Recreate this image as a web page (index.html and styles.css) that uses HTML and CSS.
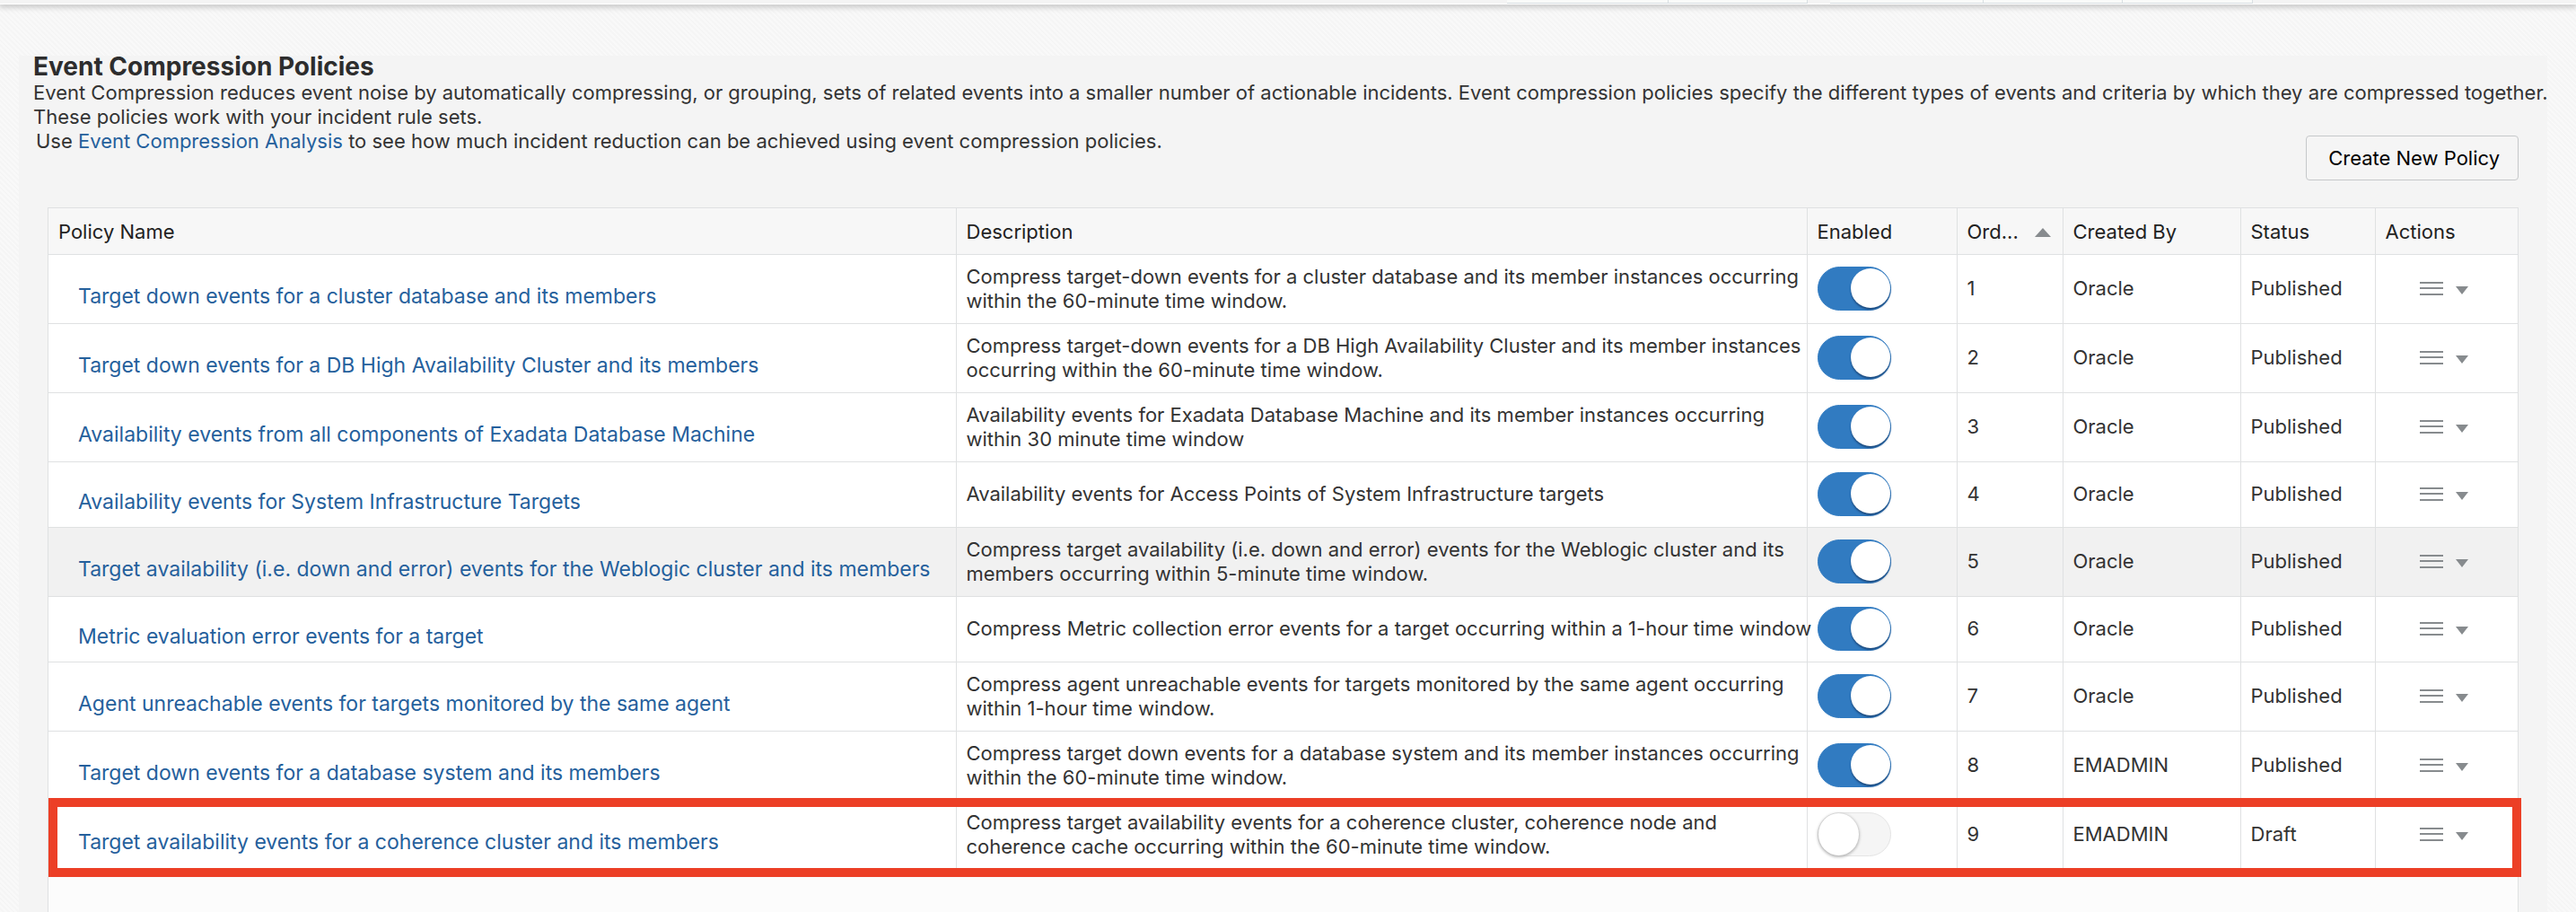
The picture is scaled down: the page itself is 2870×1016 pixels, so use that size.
FILE: index.html
```html
<!DOCTYPE html>
<html lang="en">
<head>
<meta charset="utf-8">
<title>Event Compression Policies</title>
<link rel="stylesheet" href="styles.css">
</head>
<body>
<header class="topbar"><span class="tab-group"><i class="tab tab-a"></i><i class="tab tab-b"></i></span><span class="tab-group"><i class="tab tab-c"></i><i class="tab tab-b"></i><i class="tab tab-d"></i></span></header>
<main class="panel">
  <section class="intro">
    <h1>Event Compression Policies</h1>
    <p class="lead">Event Compression reduces event noise by automatically compressing, or grouping, sets of related events into a smaller number of actionable incidents. Event compression policies specify the different types of events and criteria by which they are compressed together. These policies work with your incident rule sets.</p>
    <div class="toolbar">
      <p>Use <a href="#">Event Compression Analysis</a> to see how much incident reduction can be achieved using event compression policies.</p>
      <button class="create" type="button">Create New Policy</button>
    </div>
  </section>
  <div class="grid">
  <table>
    <colgroup><col class="c-name"><col class="c-desc"><col class="c-enabled"><col class="c-order"><col class="c-by"><col class="c-status"><col class="c-actions"></colgroup>
    <thead>
      <tr><th>Policy Name</th><th>Description</th><th>Enabled</th><th><span class="sorted">Ord...<svg class="sort" viewBox="0 0 18 10"><path d="M9 0 18 10H0Z"/></svg></span></th><th>Created By</th><th>Status</th><th>Actions</th></tr>
    </thead>
    <tbody id="rows"></tbody>
  </table>
  </div>
</main>
<script src="policies.js"></script>
</body>
</html>
```
FILE: styles.css
```css
* { box-sizing: border-box; }
body {
  margin: 0;
  min-height: 100vh;
  display: flex;
  flex-direction: column;
  font: 22px/27px Inter, "Liberation Sans", sans-serif;
  color: #333;
  background: repeating-linear-gradient(45deg, #f9f9f9 0 2px, #f5f5f5 2px 4px);
}
a { color: #25609c; text-decoration: none; }
.topbar {
  flex: none;
  height: 5px;
  display: flex;
  justify-content: flex-end;
  gap: 25px;
  padding-right: 360px;
  background: #f4f4f4;
  border-bottom: 1px solid #fff;
  box-shadow: 0 2px 6px 1px #c4c4c4;
}
.tab-group { display: flex; }
.tab { background: #f9faf9; border: 1px solid #d8dfe2; border-top: 0; border-left: 0; }
.tab-a { width: 180px; }
.tab-b { width: 155px; }
.tab-c { width: 171px; }
.tab-d { width: 145px; }
.panel {
  flex: 1;
  display: flex;
  flex-direction: column;
  margin: 57px 32px 0 21px;
  padding: 0 32px;
  background: #f4f4f4;
}
.intro { margin: 0 -16px; }
h1 { margin: 0; padding-bottom: 4px; font-size: 28px; line-height: 24px; color: #2d2d2d; }
p { margin: 0; }
.lead { margin-right: -40px; }
.toolbar { display: flex; justify-content: space-between; align-items: flex-start; padding: 0 16px 30px 3px; }
.create {
  height: 50px;
  margin-top: 7px;
  padding: 0 20px 0 24px;
  font: inherit;
  color: #000;
  background: #f5f5f5;
  border: 1px solid #c6c8ca;
  border-radius: 4px;
}
.grid { flex: 1; background: #fcfcfc; border: 1px solid #dfe1e2; border-bottom: 0; }
table { width: 100%; border-collapse: collapse; table-layout: fixed; }
.c-desc { width: 948px; }
.c-enabled { width: 167px; }
.c-order { width: 118px; }
.c-by { width: 198px; }
.c-status { width: 150px; }
.c-actions { width: 159px; }
th, td { padding: 0 0 0 11px; text-align: left; border-bottom: 1px solid #dfe1e2; border-right: 1px solid #dfe1e2; }
th:last-child, td:last-child { border-right: 0; }
th { height: 51px; font-weight: 400; background: #f7f7f7; color: #222; padding-top: 3px; }
td { height: 77px; background: #fff; }
.short td { height: 73px; }
.hover td { background: #f1f1f1; }
.name { padding-left: 33px; padding-top: 18px; }
.name a { font-size: 23px; }
.desc { white-space: pre; }
.sorted { display: flex; align-items: center; gap: 18px; }
.sort { width: 18px; height: 10px; fill: #878b8e; }
.switch { display: block; appearance: none; width: 82px; height: 49px; margin: 0; border-radius: 25px; background: #f5f5f5; border: 1px solid #e4e4e4; }
.switch::after { content: ""; display: block; width: 45px; height: 47px; border-radius: 50%; background: #fff; box-shadow: 0 1px 3px 1px #bbb; }
.switch:checked { background: #317bc1; border-color: #317bc1; }
.switch:checked::after { width: 44px; height: 44px; margin: 1px 0 0 36px; box-shadow: 0 2px 2px #1d4c80; }
.menu { display: flex; align-items: center; padding: 0; margin-left: 38px; border: 0; background: none; }
.menu svg { width: 54px; height: 16px; display: block; }
.marked { position: relative; }
.marked td:last-child::after { content: ""; position: absolute; inset: -2px -4px -9px 0; border: 10px solid #ec3f26; pointer-events: none; }
```
FILE: policies.js
```js
const policies = [
  ["Target down events for a cluster database and its members", "Compress target-down events for a cluster database and its member instances occurring\nwithin the 60-minute time window.", "Oracle"],
  ["Target down events for a DB High Availability Cluster and its members", "Compress target-down events for a DB High Availability Cluster and its member instances\noccurring within the 60-minute time window.", "Oracle"],
  ["Availability events from all components of Exadata Database Machine", "Availability events for Exadata Database Machine and its member instances occurring\nwithin 30 minute time window", "Oracle"],
  ["Availability events for System Infrastructure Targets", "Availability events for Access Points of System Infrastructure targets", "Oracle", "short"],
  ["Target availability (i.e. down and error) events for the Weblogic cluster and its members", "Compress target availability (i.e. down and error) events for the Weblogic cluster and its\nmembers occurring within 5-minute time window.", "Oracle", "hover"],
  ["Metric evaluation error events for a target", "Compress Metric collection error events for a target occurring within a 1-hour time window", "Oracle", "short"],
  ["Agent unreachable events for targets monitored by the same agent", "Compress agent unreachable events for targets monitored by the same agent occurring\nwithin 1-hour time window.", "Oracle"],
  ["Target down events for a database system and its members", "Compress target down events for a database system and its member instances occurring\nwithin the 60-minute time window.", "EMADMIN"],
  ["Target availability events for a coherence cluster and its members", "Compress target availability events for a coherence cluster, coherence node and\ncoherence cache occurring within the 60-minute time window.", "EMADMIN", "marked"]
];
document.getElementById("rows").innerHTML = policies.map(([name, desc, by, kind = ""], i) => {
  const draft = kind === "marked";
  return `<tr class="${kind}"><td class="name"><a href="#">${name}</a></td><td class="desc">${desc}</td>
  <td><input class="switch" type="checkbox" aria-label="Enable ${name}" ${draft ? "" : "checked"}></td>
  <td>${i + 1}</td><td>${by}</td><td>${draft ? "Draft" : "Published"}</td>
  <td><button class="menu" type="button" aria-label="Actions"><svg viewBox="0 0 54 16" fill="#878b8e"><path d="M0 0H26V2H0ZM0 6H26V8H0ZM0 13H26V15H0ZM40 5H54L47 14Z"/></svg></button></td></tr>`;
}).join("");
```
